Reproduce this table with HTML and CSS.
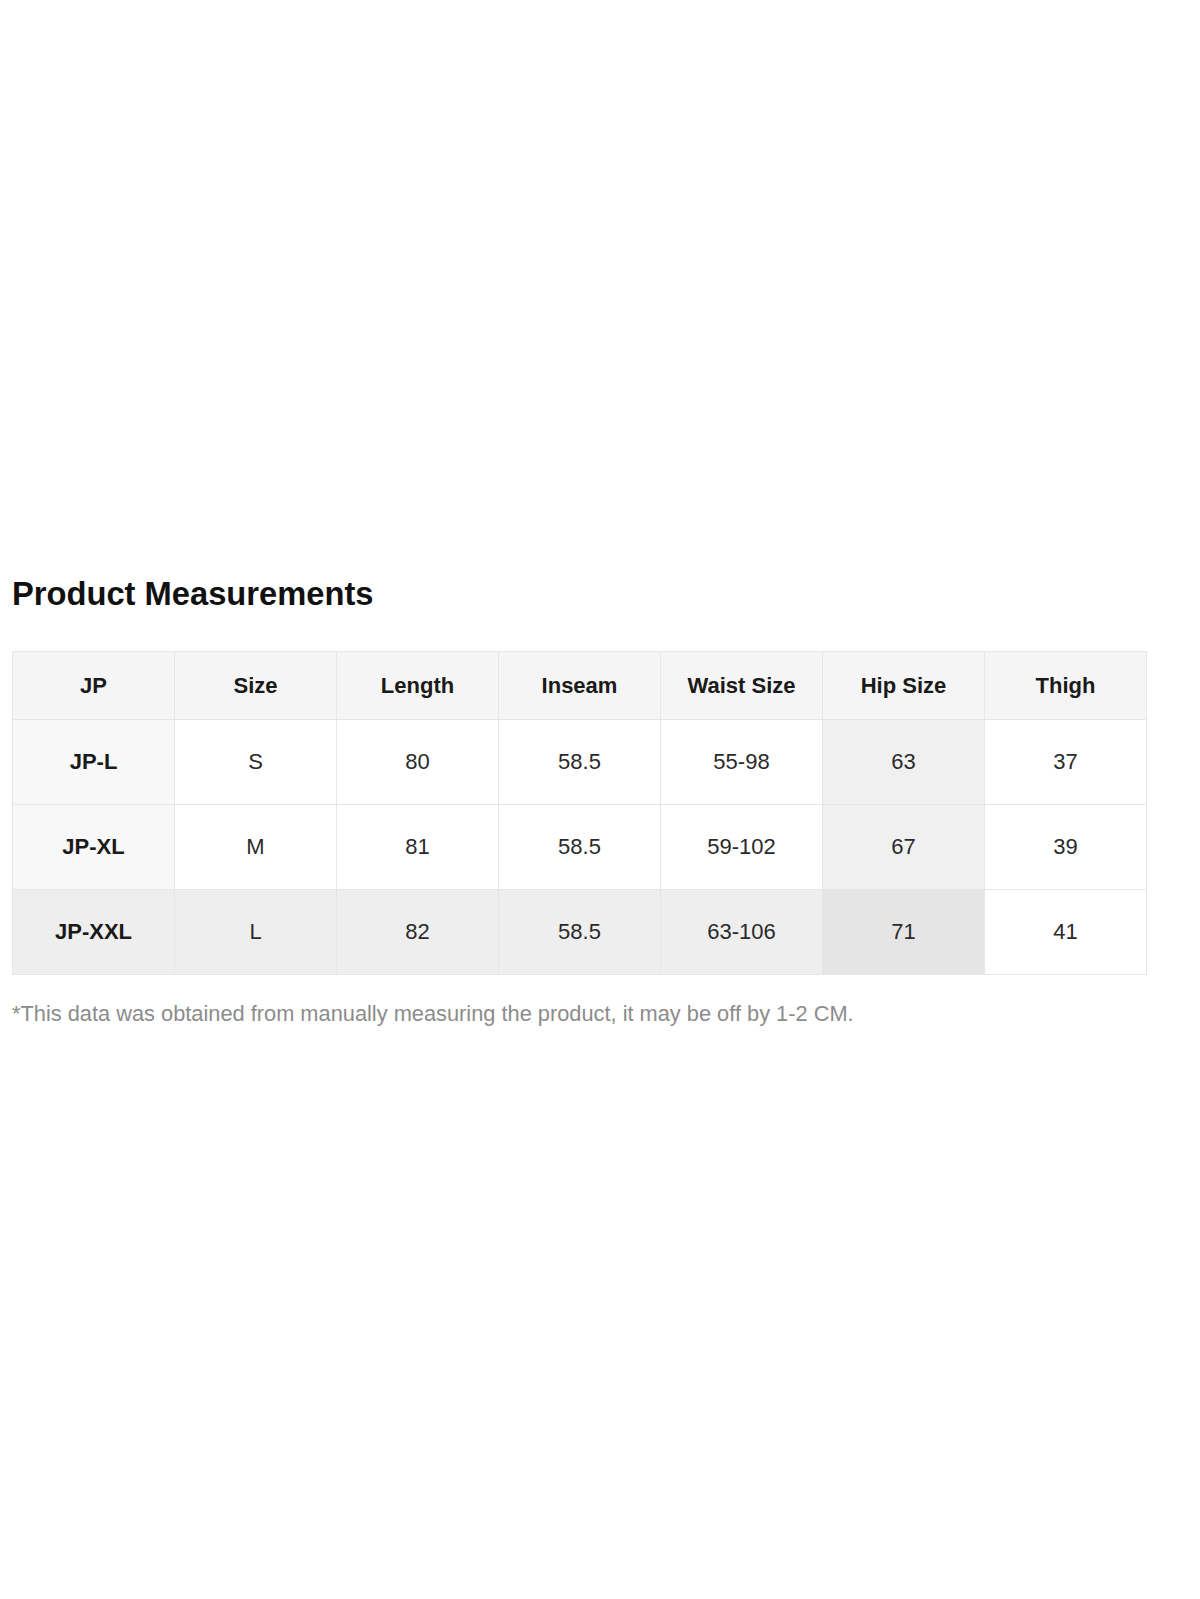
FILE: index.html
```html
<!DOCTYPE html>
<html lang="en">
<head>
<meta charset="utf-8">
<title>Product Measurements</title>
<link rel="stylesheet" href="styles.css">
</head>
<body>
<main class="page">
  <h2 class="title">Product Measurements</h2>
  <table class="size-table">
    <thead>
      <tr>
        <th>JP</th>
        <th>Size</th>
        <th>Length</th>
        <th>Inseam</th>
        <th>Waist Size</th>
        <th>Hip Size</th>
        <th>Thigh</th>
      </tr>
    </thead>
    <tbody>
      <tr>
        <td class="first">JP-L</td>
        <td>S</td>
        <td>80</td>
        <td>58.5</td>
        <td>55-98</td>
        <td class="hip">63</td>
        <td>37</td>
      </tr>
      <tr>
        <td class="first">JP-XL</td>
        <td>M</td>
        <td>81</td>
        <td>58.5</td>
        <td>59-102</td>
        <td class="hip">67</td>
        <td>39</td>
      </tr>
      <tr class="shaded">
        <td class="first">JP-XXL</td>
        <td>L</td>
        <td>82</td>
        <td>58.5</td>
        <td>63-106</td>
        <td class="hip">71</td>
        <td class="plain">41</td>
      </tr>
    </tbody>
  </table>
  <p class="note">*This data was obtained from manually measuring the product, it may be off by 1-2 CM.</p>
</main>
</body>
</html>
```
FILE: styles.css
```css
html, body {
  margin: 0;
  padding: 0;
  background: #ffffff;
}

body {
  font-family: "Liberation Sans", Arial, sans-serif;
  color: #222;
}

.page {
  padding: 575px 0 0 12px;
}

.title {
  margin: 0;
  font-size: 32.7px;
  line-height: 38px;
  font-weight: bold;
  color: #111;
}

.size-table {
  margin-top: 38px;
  width: 1135px;
  border-collapse: collapse;
  table-layout: fixed;
}

.size-table th,
.size-table td {
  border: 1px solid #e6e6e6;
  text-align: center;
  font-size: 22px;
  padding: 0;
}

.size-table th {
  height: 67px;
  background: #f5f5f5;
  font-weight: bold;
  color: #1a1a1a;
}

.size-table td {
  height: 84px;
  background: #ffffff;
  color: #2a2a2a;
}

.size-table td.first {
  background: #f8f8f8;
  font-weight: bold;
  color: #1a1a1a;
}

.size-table td.hip {
  background: #f0f0f0;
}

.size-table tr.shaded td {
  background: #eeeeee;
}

.size-table tr.shaded td.hip {
  background: #e5e5e5;
}

.size-table tr.shaded td.plain {
  background: #ffffff;
}

.note {
  margin: 26px 0 0;
  font-size: 21.8px;
  line-height: 26px;
  color: #8c8c8c;
}
```
